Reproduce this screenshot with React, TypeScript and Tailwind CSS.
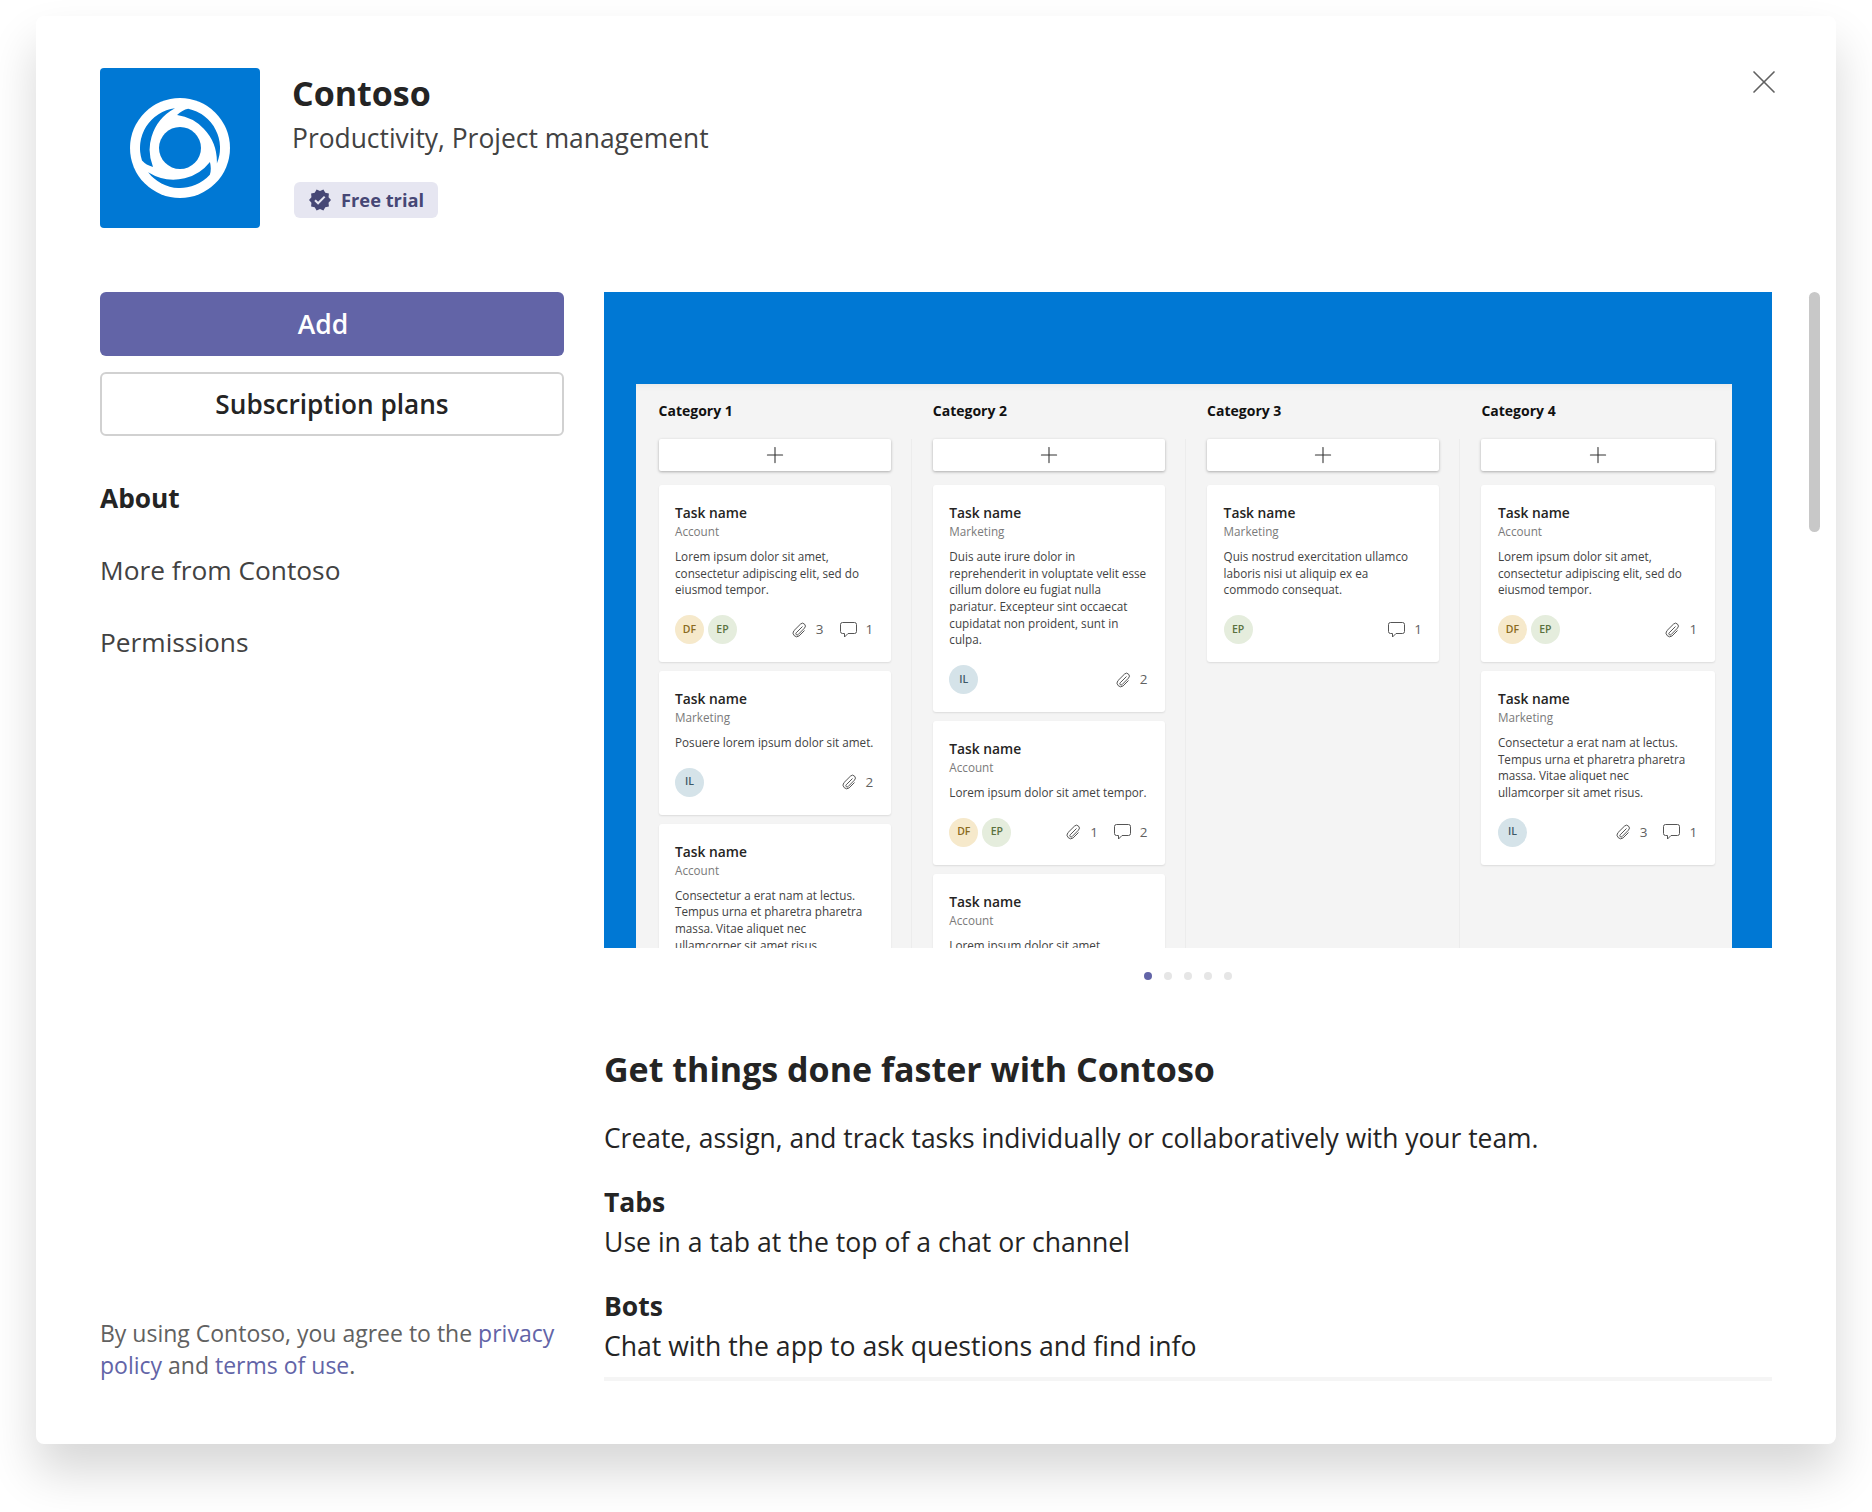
import { Plus, X } from "lucide-react";
import { MdVerified } from "react-icons/md";

type Person = "DF" | "EP" | "IL";

type Task = {
  name: string;
  team: string;
  lines: string[];
  people: Person[];
  clips?: number;
  comments?: number;
};

const avatarClass: Record<Person, string> = {
  DF: "bg-[#f6e9cb] text-[#8a6a20]",
  EP: "bg-[#e5eddd] text-[#5b7240]",
  IL: "bg-[#d5e3e9] text-[#3d5a68]",
};

const columns: { title: string; tasks: Task[] }[] = [
  {
    title: "Category 1",
    tasks: [
      {
        name: "Task name",
        team: "Account",
        lines: ["Lorem ipsum dolor sit amet,", "consectetur adipiscing elit, sed do", "eiusmod tempor."],
        people: ["DF", "EP"],
        clips: 3,
        comments: 1,
      },
      {
        name: "Task name",
        team: "Marketing",
        lines: ["Posuere lorem ipsum dolor sit amet."],
        people: ["IL"],
        clips: 2,
      },
      {
        name: "Task name",
        team: "Account",
        lines: ["Consectetur a erat nam at lectus.", "Tempus urna et pharetra pharetra", "massa. Vitae aliquet nec", "ullamcorper sit amet risus."],
        people: [],
      },
    ],
  },
  {
    title: "Category 2",
    tasks: [
      {
        name: "Task name",
        team: "Marketing",
        lines: [
          "Duis aute irure dolor in",
          "reprehenderit in voluptate velit esse",
          "cillum dolore eu fugiat nulla",
          "pariatur. Excepteur sint occaecat",
          "cupidatat non proident, sunt in",
          "culpa.",
        ],
        people: ["IL"],
        clips: 2,
      },
      {
        name: "Task name",
        team: "Account",
        lines: ["Lorem ipsum dolor sit amet tempor."],
        people: ["DF", "EP"],
        clips: 1,
        comments: 2,
      },
      {
        name: "Task name",
        team: "Account",
        lines: ["Lorem ipsum dolor sit amet"],
        people: [],
      },
    ],
  },
  {
    title: "Category 3",
    tasks: [
      {
        name: "Task name",
        team: "Marketing",
        lines: ["Quis nostrud exercitation ullamco", "laboris nisi ut aliquip ex ea", "commodo consequat."],
        people: ["EP"],
        comments: 1,
      },
    ],
  },
  {
    title: "Category 4",
    tasks: [
      {
        name: "Task name",
        team: "Account",
        lines: ["Lorem ipsum dolor sit amet,", "consectetur adipiscing elit, sed do", "eiusmod tempor."],
        people: ["DF", "EP"],
        clips: 1,
      },
      {
        name: "Task name",
        team: "Marketing",
        lines: ["Consectetur a erat nam at lectus.", "Tempus urna et pharetra pharetra", "massa. Vitae aliquet nec", "ullamcorper sit amet risus."],
        people: ["IL"],
        clips: 3,
        comments: 1,
      },
    ],
  },
];

function ContosoLogo() {
  const crescent = "M-5-39.7A40 40 0 0 0-38 12.500Q-34 17-27 19Q-33 4-28.500-11Q-23-30-5-39.7Z";
  return (
    <svg width="100" height="100" viewBox="-50 -50 100 100" aria-hidden="true">
      <circle r="50" fill="#fff" />
      <path d={crescent} fill="#0078d4" />
      <path d={crescent} fill="#0078d4" transform="rotate(-120)" />
      <path d={crescent} fill="#0078d4" transform="rotate(120)" />
      <circle r="21" fill="#0078d4" />
    </svg>
  );
}

function ClipIcon() {
  return (
    <svg width="16" height="16" viewBox="0 0 16 16" fill="none" stroke="#555" strokeWidth="1" aria-hidden="true">
      <path d="M11.500 4.500 5.200 10.800a1.300 1.300 0 0 0 1.900 1.800l6.400-6.500a2.800 2.800 0 0 0-4-4L2.900 8.700a3.700 3.700 0 0 0 5.200 5.200l5.400-5.400" />
    </svg>
  );
}

function CommentIcon() {
  return (
    <svg width="17" height="16" viewBox="0 0 17 16" fill="none" stroke="#555" strokeWidth="1" aria-hidden="true">
      <path d="M2.500.5h12a2 2 0 0 1 2 2v7a2 2 0 0 1-2 2H8l-3.500 3.500v-3.500h-2a2 2 0 0 1-2-2v-7a2 2 0 0 1 2-2Z" />
    </svg>
  );
}

function TaskCard({ task }: { task: Task }) {
  return (
    <div className="rounded-[3px] bg-white px-[16.5px] pt-[18px] pb-[18px] shadow-[0_1px_2px_rgba(0,0,0,0.1)]">
      <div className="text-[13.8px] leading-[20px] font-semibold text-[#252423]">{task.name}</div>
      <div className="text-[11.7px] leading-[16px] text-[#7a7a7a]">{task.team}</div>
      <div className="mt-[9px] text-[11.7px] leading-[16.67px] whitespace-nowrap text-[#424242]">
        {task.lines.map((line) => (
          <div key={line}>{line}</div>
        ))}
      </div>
      <div className="mt-[17px] flex h-[29px] items-center justify-between">
        <div className="flex gap-[4px]">
          {task.people.map((person) => (
            <div
              key={person}
              className={`flex h-[29px] w-[29px] items-center justify-center rounded-full text-[10.5px] font-semibold ${avatarClass[person]}`}
            >
              {person}
            </div>
          ))}
        </div>
        <div className="flex items-center gap-[16px] pr-[1px] text-[13.5px] text-[#616161]">
          {task.clips !== undefined && (
            <span className="flex items-center gap-[9px]">
              <ClipIcon />
              {task.clips}
            </span>
          )}
          {task.comments !== undefined && (
            <span className="flex items-center gap-[9px]">
              <CommentIcon />
              {task.comments}
            </span>
          )}
        </div>
      </div>
    </div>
  );
}

function Board() {
  return (
    <div className="h-[656px] overflow-hidden bg-[#0078d4] pt-[92px] pr-[40px] pl-[32px]">
      <div className="flex h-[564px] gap-[21px] overflow-hidden bg-[#f4f4f4] pt-[17px] pl-[22.500px] shadow-[inset_0_8px_8px_-8px_rgba(0,0,0,0.08)]">
        {columns.map((column, index) => (
          <div key={column.title} className="w-[253.300px] shrink-0">
            <div className="mb-[18px] h-[20px] text-[14px] leading-[20px] font-bold text-[#111]">
              {column.title}
            </div>
            <div className={`h-[540px] pr-[20px] ${index < 3 ? "border-r border-[#ececec]" : ""}`}>
              <div className="flex h-[32px] items-center justify-center rounded-[2px] bg-white shadow-[0_1px_3px_rgba(0,0,0,0.3)]">
                <Plus size={26} strokeWidth={1} className="text-[#333]" />
              </div>
              <div className="mt-[14px] flex flex-col gap-[9px]">
                {column.tasks.map((task, i) => (
                  <TaskCard key={i} task={task} />
                ))}
              </div>
            </div>
          </div>
        ))}
      </div>
    </div>
  );
}

export default function App() {
  return (
    <div className="h-[1512px] overflow-hidden bg-white pt-[16px] pl-[36px] font-['Open_Sans','Liberation_Sans',sans-serif]">
      <div className="relative h-[1428px] w-[1800px] rounded-[8px] bg-white px-[64px] pt-[52px] shadow-[0_28px_48px_rgba(0,0,0,0.16)]">
        <button className="absolute top-[46px] right-[52px] text-[#616161]">
          <X size={40} strokeWidth={1} />
        </button>
        <div className="absolute top-[276px] right-[16px] h-[240px] w-[11px] rounded-full bg-[#c8c8c8]" />

        <header className="flex h-[160px] gap-[32px]">
          <div className="flex h-[160px] w-[160px] items-center justify-center rounded-[4px] bg-[#0078d4]">
            <ContosoLogo />
          </div>
          <div>
            <h1 className="mt-[3px] text-[34px] leading-[44px] font-bold text-[#242424]">Contoso</h1>
            <p className="mt-[5px] text-[26.4px] leading-[36px] text-[#424242]">Productivity, Project management</p>
            <span className="mt-[26px] ml-[2px] flex h-[36px] w-[144px] items-center gap-[9px] rounded-[6px] bg-[#e6e6f1] pl-[14px] text-[18.3px] font-bold text-[#464775]">
              <MdVerified size={24} />
              Free trial
            </span>
          </div>
        </header>

        <div className="mt-[64px] flex gap-[40px]">
          <aside className="flex h-[1092px] w-[464px] shrink-0 flex-col justify-between">
            <div>
              <button className="flex h-[64px] w-full items-center justify-center rounded-[6px] bg-[#6264a7] pt-[2px] pr-[18px] text-[26.5px] font-semibold text-white">
                Add
              </button>
              <button className="mt-[16px] flex h-[64px] w-full items-center justify-center rounded-[6px] border-2 border-[#d1d1d1] pt-[2px] text-[26.2px] font-semibold text-[#242424]">
                Subscription plans
              </button>
              <nav className="mt-[44px] flex flex-col gap-[36px] text-[26.3px] leading-[36px] text-[#424242]">
                <span className="font-bold text-[#242424]">About</span>
                <span>More from Contoso</span>
                <span>Permissions</span>
              </nav>
            </div>
            <p className="mb-[3px] text-[23px] leading-[32px] text-[#616161]">
              By using Contoso, you agree to the <span className="text-[#6264a7]">privacy policy</span> and{" "}
              <span className="text-[#6264a7]">terms of use</span>.
            </p>
          </aside>

          <main className="w-[1168px] shrink-0">
            <Board />
            <div className="mt-[24px] flex h-[8px] justify-center gap-[12px]">
              <span className="h-[8px] w-[8px] rounded-full bg-[#6264a7]" />
              <span className="h-[8px] w-[8px] rounded-full bg-[#e6e6e6]" />
              <span className="h-[8px] w-[8px] rounded-full bg-[#e6e6e6]" />
              <span className="h-[8px] w-[8px] rounded-full bg-[#e6e6e6]" />
              <span className="h-[8px] w-[8px] rounded-full bg-[#e6e6e6]" />
            </div>
            <h2 className="mt-[65px] text-[34px] leading-[48px] font-bold text-[#242424]">
              Get things done faster with Contoso
            </h2>
            <p className="mt-[27px] text-[26.4px] leading-[36px] text-[#242424]">
              Create, assign, and track tasks individually or collaboratively with your team.
            </p>
            <h3 className="mt-[28px] text-[26.5px] leading-[36px] font-bold text-[#242424]">Tabs</h3>
            <p className="mt-[4px] text-[26.6px] leading-[36px] text-[#242424]">Use in a tab at the top of a chat or channel</p>
            <h3 className="mt-[28px] text-[26.5px] leading-[36px] font-bold text-[#242424]">Bots</h3>
            <p className="mt-[4px] text-[26.6px] leading-[36px] text-[#242424]">Chat with the app to ask questions and find info</p>
            <div className="mt-[13px] h-[4px] bg-[#f5f5f5]" />
          </main>
        </div>
      </div>
    </div>
  );
}
